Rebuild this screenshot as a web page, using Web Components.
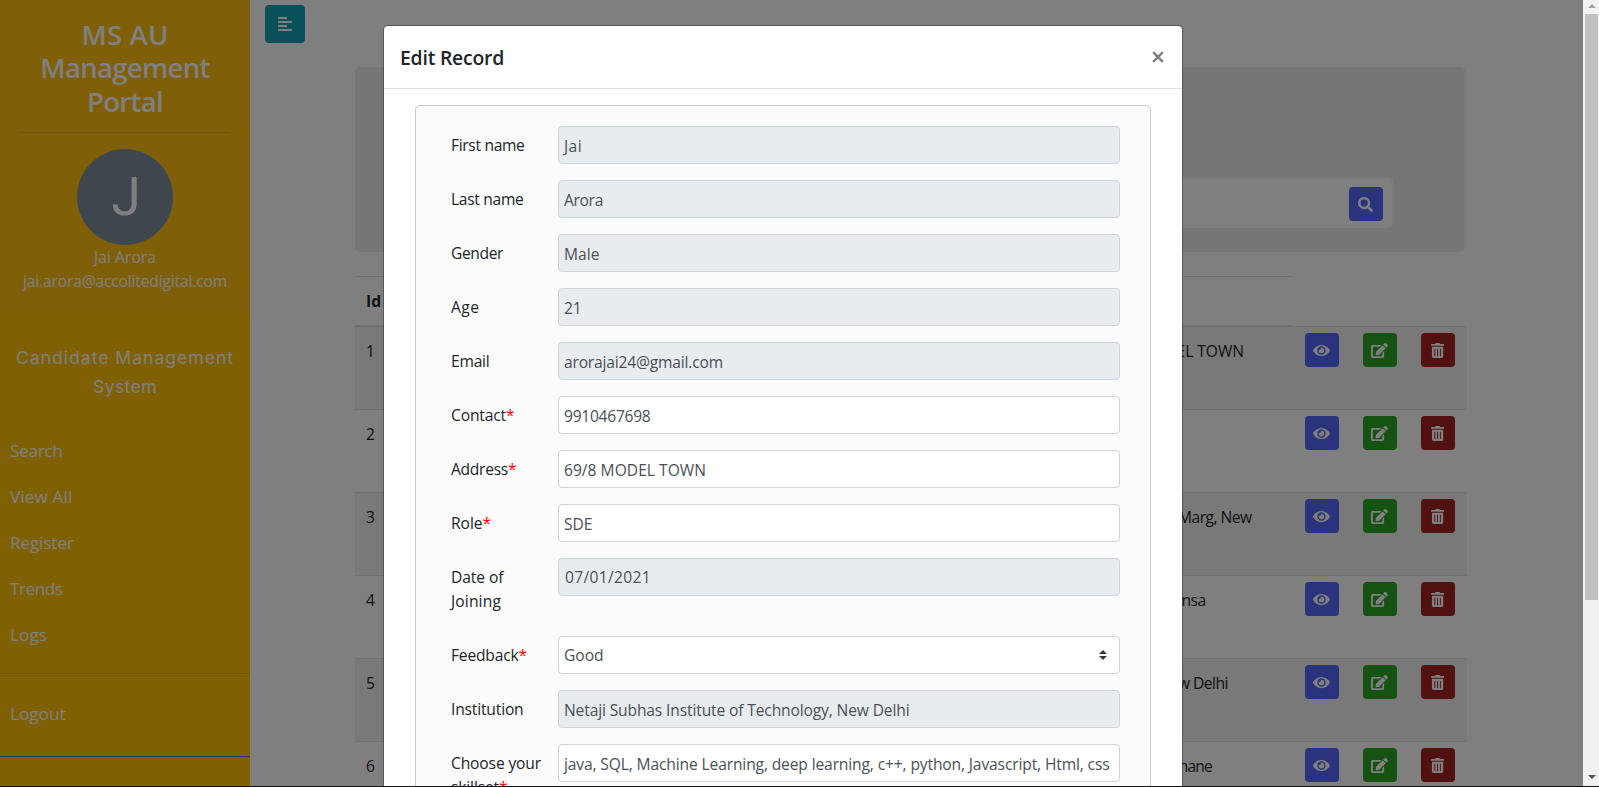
<!DOCTYPE html>
<html lang="en">
<head>
<meta charset="utf-8">
<title>MS AU Management Portal</title>
<style>
html,body{margin:0;height:100%;overflow:hidden}
body{font-family:"Open Sans","Noto Sans",sans-serif;font-size:15.6px;line-height:24px;color:#212529;background:#fff}
</style>
</head>
<body>
<portal-app></portal-app>
<script>
const ICONS = {
  eye:[576,'M572.52 241.4C518.29 135.59 410.93 64 288 64S57.68 135.64 3.48 241.41a32.35 32.35 0 0 0 0 29.19C57.71 376.41 165.07 448 288 448s230.32-71.64 284.52-177.41a32.35 32.35 0 0 0 0-29.19zM288 400a144 144 0 1 1 144-144 143.93 143.93 0 0 1-144 144zm0-240a95.31 95.31 0 0 0-25.31 3.79 47.85 47.85 0 0 1-66.9 66.9A95.78 95.78 0 1 0 288 160z'],
  edit:[576,'M402.6 83.2l90.2 90.2c3.8 3.8 3.8 10 0 13.8L274.4 405.6l-92.8 10.3c-12.4 1.4-22.9-9.1-21.5-21.5l10.3-92.8L388.8 83.2c3.8-3.8 10-3.8 13.8 0zm162-22.9l-48.8-48.8c-15.2-15.2-39.9-15.2-55.2 0l-35.4 35.4c-3.8 3.8-3.8 10 0 13.8l90.2 90.2c3.8 3.8 10 3.8 13.8 0l35.4-35.4c15.2-15.3 15.2-40 0-55.2zM384 346.2V448H64V128h229.8c3.2 0 6.2-1.3 8.5-3.5l40-40c7.6-7.6 2.2-20.5-8.5-20.5H48C21.5 64 0 85.5 0 112v352c0 26.5 21.5 48 48 48h352c26.5 0 48-21.5 48-48V306.2c0-10.7-12.9-16-20.5-8.5l-40 40c-2.2 2.3-3.5 5.3-3.5 8.5z'],
  trash:[448,'M32 464a48 48 0 0 0 48 48h288a48 48 0 0 0 48-48V128H32zm272-256a16 16 0 0 1 32 0v224a16 16 0 0 1-32 0zm-96 0a16 16 0 0 1 32 0v224a16 16 0 0 1-32 0zm-96 0a16 16 0 0 1 32 0v224a16 16 0 0 1-32 0zM432 32H312l-9.4-18.7A24 24 0 0 0 281.1 0H166.8a23.72 23.72 0 0 0-21.4 13.3L136 32H16A16 16 0 0 0 0 48v32a16 16 0 0 0 16 16h416a16 16 0 0 0 16-16V48a16 16 0 0 0-16-16z'],
  search:[512,'M505 442.7L405.3 343c-4.5-4.5-10.6-7-17-7H372c27.6-35.3 44-79.7 44-128C416 93.1 322.9 0 208 0S0 93.1 0 208s93.1 208 208 208c48.3 0 92.7-16.4 128-44v16.3c0 6.4 2.5 12.5 7 17l99.7 99.7c9.4 9.4 24.6 9.4 33.9 0l28.3-28.3c9.4-9.4 9.4-24.6.1-34zM208 336c-70.7 0-128-57.2-128-128 0-70.7 57.2-128 128-128 70.7 0 128 57.2 128 128 0 70.7-57.2 128-128 128z']
};
const define = (name, html, setup) => customElements.define(name, class extends HTMLElement {
  connectedCallback() {
    if (this.shadowRoot) return;
    this.attachShadow({mode:'open'}).innerHTML = typeof html === 'function' ? html(this) : html;
    if (setup) setup(this);
  }
});

/* A run of text tracked so that it takes the width given in px. */
define('fit-text', `<style>:host{display:inline-block;white-space:nowrap;vertical-align:top}</style><slot></slot>`, el => {
  const n = [...el.textContent].length;
  const w = el.getBoundingClientRect().width;
  el.style.letterSpacing = ((+el.getAttribute('w') - w) / n).toFixed(3) + 'px';
});

define('icon-button', el => {
  const [vw, d] = ICONS[el.getAttribute('icon')];
  return `<style>
    :host{display:flex;flex:none;align-items:center;justify-content:center;width:34px;height:34px;border-radius:4px;background:var(--tone,#5269f8)}
    svg{display:block;height:15px;width:${vw / 512 * 15}px;margin-right:1px}
  </style><svg viewBox="0 0 ${vw} 512"><path fill="#fff" d="${d}"/></svg>`;
});

define('nav-item', `<style>
  :host{display:block;height:46px;line-height:46px;padding-left:10px;font-size:17.2px;color:#fff}
</style><slot></slot>`);

define('side-bar', `<style>
  :host{display:flex;flex-direction:column;flex:none;width:250px;background:#ffc107;color:#fff;box-sizing:border-box}
  header{padding:18px 20px 20px;text-align:center;background:#ffc012}
  h3{margin:0;font-size:27.5px;line-height:33.3px;font-weight:600}
  h3 fit-text{display:block;width:max-content;margin:auto}
  hr{border:0;height:1px;margin:0;background:rgba(0,0,0,.1)}
  header hr{margin:14px 0 16px}
  .avatar{width:96px;height:96px;border-radius:50%;background:#7c8f9b;margin:0 auto;font:53px/96px Roboto,sans-serif;text-indent:2px}
  .who{white-space:nowrap;margin:0 -15px}
  .sys{margin:30px 0 27px;font:17.6px/29px Inter,sans-serif;text-align:center}
  .gap{margin:15px 0 17px}
  .end{height:1px;margin-top:19px;background:#44749e}
</style>
<header>
  <h3><fit-text w="87">MS AU</fit-text><fit-text w="169.5">Management</fit-text><fit-text w="76">Portal</fit-text></h3>
  <hr><div class="avatar">J</div>
  <div class="who"><fit-text w="62">Jai Arora</fit-text></div>
  <div class="who"><fit-text w="204">jai.arora@accolitedigital.com</fit-text></div>
</header>
<div class="sys"><fit-text w="218">Candidate Management</fit-text><br><fit-text w="64">System</fit-text></div>
<nav-item><fit-text w="52.5">Search</fit-text></nav-item>
<nav-item><fit-text w="62.5">View All</fit-text></nav-item>
<nav-item><fit-text w="63.5">Register</fit-text></nav-item>
<nav-item><fit-text w="52.5">Trends</fit-text></nav-item>
<nav-item><fit-text w="37">Logs</fit-text></nav-item>
<hr class="gap">
<nav-item><fit-text w="55.5">Logout</fit-text></nav-item>
<div class="end"></div>`);

define('record-row', el => `<style>
  :host{display:flex;height:83px;box-sizing:border-box;border-top:1px solid #dee2e6}
  :host([striped]){background:#f2f2f2}
  .id{width:60px;padding:12px 0 0 11px;box-sizing:border-box}
  .addr{width:${el.getAttribute('end') - 415}px;padding-top:12px;text-align:right;white-space:nowrap}
  .acts{display:flex;gap:24px;margin-left:auto;padding:6px 12px 0 0}
</style>
<div class="id">${el.getAttribute('n')}</div>
<div class="addr"><slot></slot></div>
<div class="acts"><icon-button icon="eye"></icon-button><icon-button icon="edit" style="--tone:#2ca525"></icon-button><icon-button icon="trash" style="--tone:#a52222"></icon-button></div>`);

define('records-page', `<style>
  :host{display:flex;flex:1;flex-direction:column;min-width:0;overflow:hidden;box-sizing:border-box;padding:5px 0 0 15px}
  .toggle{display:flex;flex-direction:column;gap:2px;width:40px;height:38px;box-sizing:border-box;padding:12px 0 0 13px;border-radius:4px;background:#17a2b8;flex:none}
  .toggle i{height:2px;width:14px;background:#fff}
  .toggle i:nth-child(odd){width:9px}
  .content{margin:24px 0 0 90px;width:1112px}
  .jumbo{width:1110px;height:185px;border-radius:5px;background:#ececec;box-sizing:border-box;padding:111px 72px 0}
  .bar{height:50px;border-radius:5px;background:#fff;box-sizing:border-box;padding:9px 10px 0;display:flex;justify-content:flex-end}
  .head{width:938px;margin-top:24px;height:50px;box-sizing:border-box;border-top:1px solid #dee2e6;border-bottom:1px solid #dee2e6;padding:12px 11px 0;font-weight:700}
</style>
<div class="toggle"><i></i><i></i><i></i><i></i></div>
<div class="content">
  <div class="jumbo"><div class="bar"><icon-button icon="search"></icon-button></div></div>
  <div class="head">Id</div>
  <record-row n="1" striped end="1244"><fit-text w="141">69/8 MODEL TOWN</fit-text></record-row>
  <record-row n="2" end="1200"></record-row>
  <record-row n="3" striped end="1251.5"><fit-text w="73.5">Marg, New</fit-text></record-row>
  <record-row n="4" end="1205.5"><fit-text w="24">nsa</fit-text></record-row>
  <record-row n="5" striped end="1228"><fit-text w="69.5">New Delhi</fit-text></record-row>
  <record-row n="6" end="1212"><fit-text w="41">Thane</fit-text></record-row>
</div>`);

define('form-row', el => {
  const lw = el.getAttribute('lw').split(',');
  const lines = el.getAttribute('label').split('|');
  const type = el.getAttribute('type') || 'text';
  return `<style>
  :host{display:flex;align-items:flex-start;margin-bottom:16px}
  .label{width:107px;padding:7px 0;flex:none}
  .label div{white-space:nowrap}
  b{font-weight:400;color:#f00}
  .box{flex:1;display:flex;justify-content:space-between;height:38px;box-sizing:border-box;border:1px solid #ced4da;border-radius:4px;background:${el.hasAttribute('readonly') ? '#e9ecef' : '#fff'};color:#495057;padding:${type === 'text' ? 7 : 6}px 12px 0 ${type === 'date' ? 6 : 5}px;white-space:nowrap;overflow:hidden}
  svg{width:8px;height:10px;margin-top:7px}
  </style>
  <div class="label">${lines.map((t, i) => `<div><fit-text w="${lw[i]}">${t}</fit-text>${el.hasAttribute('required') && i === lines.length - 1 ? '<b>*</b>' : ''}</div>`).join('')}</div>
  <div class="box"><fit-text w="${el.getAttribute('vw')}">${el.getAttribute('value')}</fit-text>${type === 'select' ? '<svg viewBox="0 0 4 5"><path fill="#343a40" d="M2 0L0 2h4zm0 5L0 3h4z"/></svg>' : ''}</div>`;
});

define('edit-modal', `<style>
  :host{display:block;position:absolute;left:383px;top:25px;width:800px;height:860px;box-sizing:border-box;border:1px solid rgba(0,0,0,.3);border-radius:5px;background:#fff;background-clip:padding-box}
  header{display:flex;justify-content:space-between;height:63px;box-sizing:border-box;padding:17px 18px 0 16px;border-bottom:1px solid #dee2e6;font-size:19.4px;line-height:30px;font-weight:600}
  svg{width:12px;height:12px;margin-top:8px}
  .card{margin:16px 31px 0;border:1px solid #c8cacc;border-radius:5px;background:#fbfbfb;padding:20px 30px 40px 35px}
</style>
<header><fit-text w="104">Edit Record</fit-text><svg viewBox="0 0 12 12"><path d="M1.2 1.2l9.6 9.6M10.8 1.2L1.2 10.8" stroke="#7f7f7f" stroke-width="2.4"/></svg></header>
<div class="card">
  <form-row label="First name" lw="73.5" value="Jai" vw="18" readonly></form-row>
  <form-row label="Last name" lw="72.5" value="Arora" vw="39" readonly></form-row>
  <form-row label="Gender" lw="52" value="Male" vw="35.5" readonly></form-row>
  <form-row label="Age" lw="28.5" value="21" vw="17.5" readonly></form-row>
  <form-row label="Email" lw="38.5" value="arorajai24@gmail.com" vw="159" readonly></form-row>
  <form-row label="Contact" lw="55" value="9910467698" vw="86.5" required></form-row>
  <form-row label="Address" lw="57" value="69/8 MODEL TOWN" vw="142" required></form-row>
  <form-row label="Role" lw="31.5" value="SDE" vw="28.5" required></form-row>
  <form-row label="Date of|Joining" lw="52.5,50" value="07/01/2021" vw="86" type="date" readonly></form-row>
  <form-row label="Feedback" lw="67.5" value="Good" vw="39.5" type="select" required></form-row>
  <form-row label="Institution" lw="72.5" value="Netaji Subhas Institute of Technology, New Delhi" vw="345.5" readonly></form-row>
  <form-row label="Choose your|skillset" lw="90,48" value="java, SQL, Machine Learning, deep learning, c++, python, Javascript, Html, css" vw="545.5" required></form-row>
</div>`);

define('scroll-bar', `<style>
  :host{display:flex;flex-direction:column;position:absolute;right:0;top:0;bottom:1px;width:16px;background:#f1f1f1;align-items:center}
  .thumb{width:13px;height:586px;background:#c1c1c1;margin-left:1px}
  svg{width:8px;height:4px;margin:4px 0 6px 1px}
  svg:last-child{margin:auto 0 7px 1px}
</style>
<svg viewBox="0 0 8 4"><path fill="#a3a3a3" d="M4 0l4 4H0z"/></svg>
<div class="thumb"></div>
<svg viewBox="0 0 8 4"><path fill="#505050" d="M4 4L0 0h8z"/></svg>`);

define('portal-app', `<style>
  :host{display:flex;position:relative;width:1599px;height:787px;overflow:hidden}
  .shade{position:absolute;inset:0;background:rgba(0,0,0,.5)}
  .edge{position:absolute;left:0;right:0;bottom:0;height:1px;background:#15131a}
</style>
<side-bar></side-bar>
<records-page></records-page>
<div class="shade"></div>
<edit-modal></edit-modal>
<scroll-bar></scroll-bar>
<div class="edge"></div>`);
</script>
</body>
</html>
